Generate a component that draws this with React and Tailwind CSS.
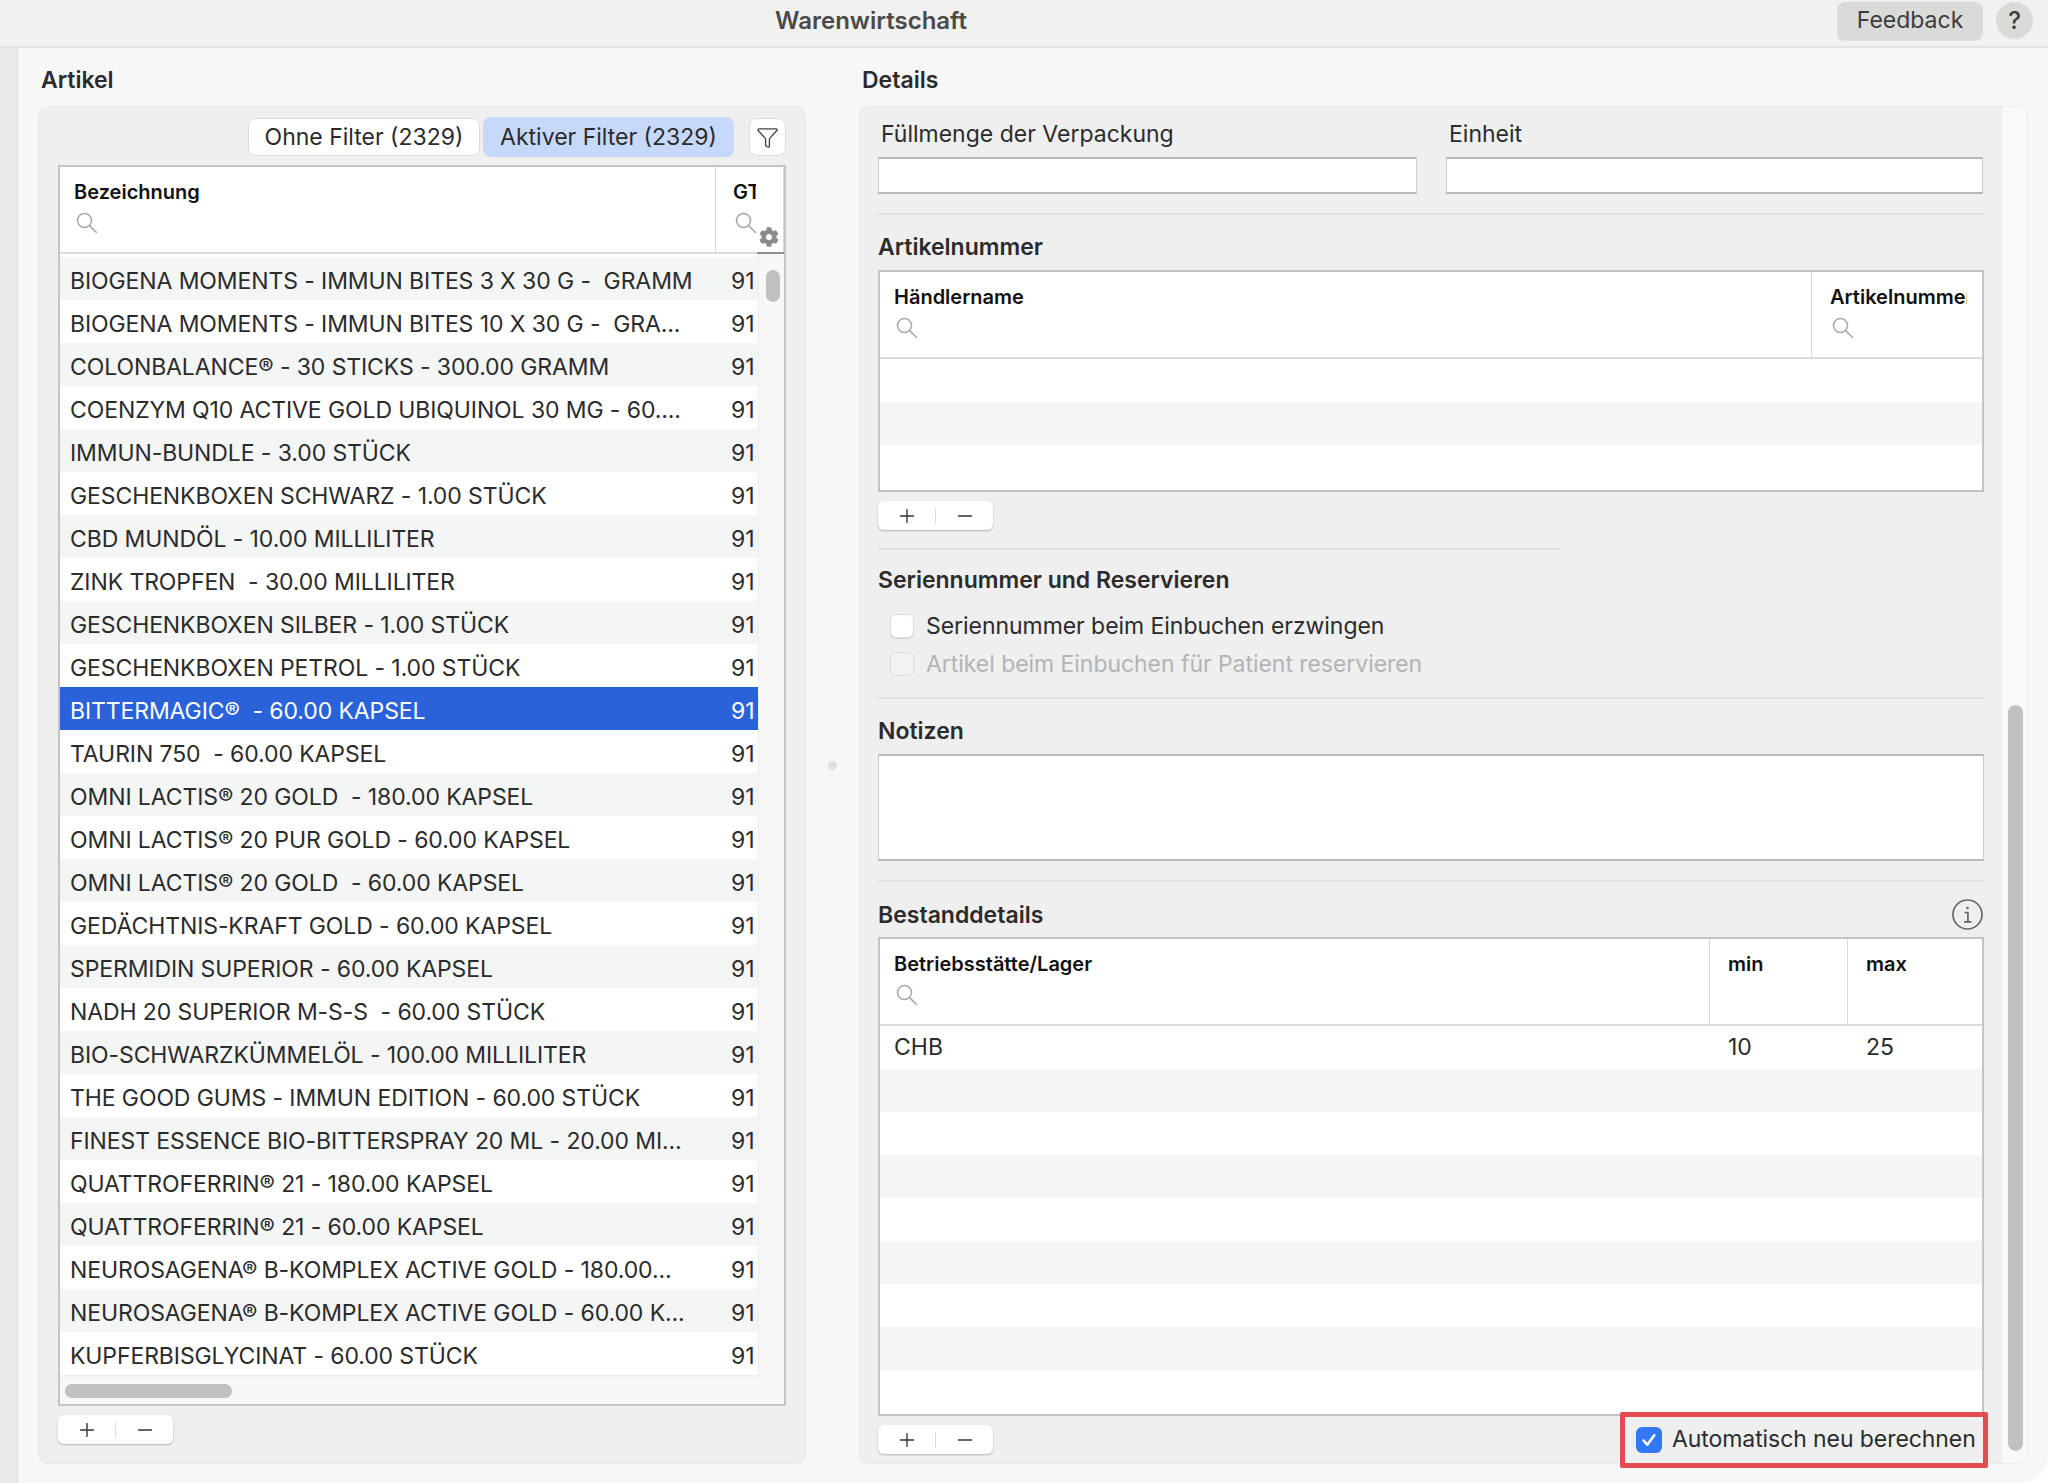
import React from "react";
import { Funnel, Plus, Minus } from "lucide-react";
import { FaCog } from "react-icons/fa";

const articles = [
  "BIOGENA MOMENTS - IMMUN BITES 3 X 30 G -  GRAMM",
  "BIOGENA MOMENTS - IMMUN BITES 10 X 30 G -  GRA...",
  "COLONBALANCE® - 30 STICKS - 300.00 GRAMM",
  "COENZYM Q10 ACTIVE GOLD UBIQUINOL 30 MG - 60....",
  "IMMUN-BUNDLE - 3.00 STÜCK",
  "GESCHENKBOXEN SCHWARZ - 1.00 STÜCK",
  "CBD MUNDÖL - 10.00 MILLILITER",
  "ZINK TROPFEN  - 30.00 MILLILITER",
  "GESCHENKBOXEN SILBER - 1.00 STÜCK",
  "GESCHENKBOXEN PETROL - 1.00 STÜCK",
  "BITTERMAGIC®  - 60.00 KAPSEL",
  "TAURIN 750  - 60.00 KAPSEL",
  "OMNI LACTIS® 20 GOLD  - 180.00 KAPSEL",
  "OMNI LACTIS® 20 PUR GOLD - 60.00 KAPSEL",
  "OMNI LACTIS® 20 GOLD  - 60.00 KAPSEL",
  "GEDÄCHTNIS-KRAFT GOLD - 60.00 KAPSEL",
  "SPERMIDIN SUPERIOR - 60.00 KAPSEL",
  "NADH 20 SUPERIOR M-S-S  - 60.00 STÜCK",
  "BIO-SCHWARZKÜMMELÖL - 100.00 MILLILITER",
  "THE GOOD GUMS - IMMUN EDITION - 60.00 STÜCK",
  "FINEST ESSENCE BIO-BITTERSPRAY 20 ML - 20.00 MI...",
  "QUATTROFERRIN® 21 - 180.00 KAPSEL",
  "QUATTROFERRIN® 21 - 60.00 KAPSEL",
  "NEUROSAGENA® B-KOMPLEX ACTIVE GOLD - 180.00...",
  "NEUROSAGENA® B-KOMPLEX ACTIVE GOLD - 60.00 K...",
  "KUPFERBISGLYCINAT - 60.00 STÜCK",
];

const SearchGlyph = () => (
  <svg width="22" height="22" viewBox="0 0 22 22" fill="none" stroke="#a9a9a9" strokeWidth="1.6" strokeLinecap="round">
    <circle cx="8.5" cy="8.5" r="7" />
    <line x1="13.6" y1="13.6" x2="20.5" y2="20.5" />
  </svg>
);

const InfoGlyph = () => (
  <svg width="33" height="33" viewBox="0 0 33 33" fill="none" stroke="#666666" strokeWidth="1.7">
    <circle cx="16.5" cy="16.5" r="14.5" />
    <circle cx="16.5" cy="10" r="1.3" fill="#666666" stroke="none" />
    <path d="M13.5 14.5h3.4v9M13 23.8h7.5" />
  </svg>
);

const AddRemove = () => (
  <div className="flex h-[29px] w-[115px] items-center rounded-md bg-white shadow-[0_1px_2px_rgba(0,0,0,0.25)]">
    <div className="flex flex-1 items-center justify-center text-[#333333]">
      <Plus size={22} strokeWidth={1.5} />
    </div>
    <div className="h-[16px] w-px bg-[#dddddd]" />
    <div className="flex flex-1 items-center justify-center text-[#333333]">
      <Minus size={22} strokeWidth={1.5} />
    </div>
  </div>
);

const HeadCell = ({ title, search = true, className = "" }) => (
  <div className={`h-full min-w-0 border-r border-[#d8d8d8] bg-white pt-[12px] last:border-r-0 ${className}`}>
    <div className="h-[26px] overflow-hidden whitespace-nowrap text-[20px] font-semibold leading-[26px] text-[#111111]">{title}</div>
    {search && (
      <div className="mt-[7px] pl-[2px]">
        <SearchGlyph />
      </div>
    )}
  </div>
);

const Divider = ({ className = "" }) => <div className={`h-[2px] bg-[#e1e1e1] ${className}`} />;

const SectionTitle = ({ children, className = "" }) => (
  <div className={`h-[28px] text-[23px] font-semibold leading-[28px] text-[#2b2b2b] ${className}`}>{children}</div>
);

const TextBox = ({ className = "" }) => (
  <div className={`border border-[#cccccc] border-t-2 border-t-[#b9b9b9] border-b-2 border-b-[#b9b9b9] bg-white ${className}`} />
);

const CheckRow = ({ label, disabled }) => (
  <div className="flex h-[38px] items-center pl-[12px]">
    <div
      className={`h-[24px] w-[24px] rounded-[6px] border border-[#dcdcdc] ${disabled ? "bg-[#f2f2f2]" : "bg-white shadow-[0_1px_1px_rgba(0,0,0,0.12)]"}`}
    />
    <span className={`ml-[12px] text-[23px] tracking-[-0.05px] ${disabled ? "text-[#b4b4b4]" : "text-[#2b2b2b]"}`}>{label}</span>
  </div>
);

const App = () => {
  return (
    <div className="h-[1483px] w-[2048px] overflow-hidden bg-white font-['Inter',sans-serif] text-[#2b2b2b]">
      <div className="flex h-full flex-col overflow-hidden rounded-br-[28px]">
        {/* title bar */}
        <div className="flex h-[48px] shrink-0 items-center border-b-2 border-[#e2e2e1] bg-[#f1f1f0] pb-[5px] pl-[775px] pr-[15px]">
          <span className="text-[24px] font-semibold text-[#4a4a4a]">Warenwirtschaft</span>
          <div className="ml-auto flex items-center gap-[13px]">
            <div className="flex h-[38px] w-[146px] items-center justify-center rounded-lg bg-[#dadad9] text-[23px] text-[#3c3c3c] shadow-[0_1px_1px_rgba(0,0,0,0.08)]">
              Feedback
            </div>
            <div className="flex h-[37px] w-[37px] items-center justify-center rounded-full bg-[#dadad9] text-[24px] font-medium text-[#3c3c3c]">
              ?
            </div>
          </div>
        </div>

        <div className="flex flex-1">
          <div className="w-[18px] shrink-0 border-r border-[#dedede] bg-[#e9e9e9]" />
          <div className="flex flex-1 bg-[#f7f7f7]">
            {/* Artikel */}
            <div className="w-[788px] shrink-0 pl-[20px]">
              <div className="flex h-[58px] items-center pl-[3px] pt-[6px] text-[23px] font-semibold">Artikel</div>
              <div className="h-[1358px] rounded-[10px] border border-[#e9e9e9] bg-[#efefef] px-[19px] pt-[10px]">
                <div className="flex items-center justify-end">
                  <div className="flex h-[38px] w-[232px] items-center justify-center rounded-lg border border-[#dedede] bg-white text-[23px]">
                    Ohne Filter (2329)
                  </div>
                  <div className="ml-[3px] flex h-[40px] w-[251px] items-center justify-center rounded-lg bg-[#c6d9fb] text-[23px]">
                    Aktiver Filter (2329)
                  </div>
                  <div className="ml-[15px] flex h-[38px] w-[37px] items-center justify-center rounded-lg border border-[#dedede] bg-white">
                    <Funnel size={23} strokeWidth={1.4} color="#444444" />
                  </div>
                </div>
                <div className="mt-[8px] flex h-[1241px] flex-col border-2 border-[#c4c4c4] bg-white">
                  <div className="relative flex h-[87px] shrink-0 border-b-2 border-[#dcdcdc]">
                    <HeadCell title="Bezeichnung" className="w-[656px] shrink-0 pl-[14px]" />
                    <HeadCell title="GTIN" className="flex-1 pl-[17px] pr-[27px]" />
                    <div className="absolute bottom-[5px] right-[5px] text-[#8a8a8a]">
                      <FaCog size={20} />
                    </div>
                    <div className="absolute -bottom-[2px] right-0 h-[2px] w-[27px] bg-[#8f8f8f]" />
                  </div>
                  <div className="flex min-h-0 flex-1">
                    <div className="w-[698px] shrink-0 pt-[3px]">
                      {articles.map((name, i) => (
                        <div
                          key={i}
                          className={`flex h-[43px] items-center overflow-hidden text-[23px] tracking-[-0.1px] ${
                            i === 10 ? "bg-[#2a62d9] text-white" : i % 2 === 0 ? "bg-[#f4f5f5]" : "bg-white"
                          }`}
                        >
                          <div className="w-[671px] shrink-0 whitespace-pre pl-[10px] pt-[5px]">{name}</div>
                          <div className="w-[25px] shrink-0 overflow-hidden pt-[5px]">913</div>
                        </div>
                      ))}
                      <div className="h-[2px] bg-[#efefef]" />
                    </div>
                    <div className="flex-1 border-l border-[#ebebeb] bg-[#f8f8f8] pl-[7px] pt-[16px]">
                      <div className="h-[32px] w-[14px] rounded-full bg-[#c0c0c0]" />
                    </div>
                  </div>
                  <div className="flex h-[27px] shrink-0 items-center bg-[#f7f7f7] pl-[5px]">
                    <div className="h-[14px] w-[167px] rounded-full bg-[#c0c0c0]" />
                  </div>
                </div>
                <div className="mt-[9px]">
                  <AddRemove />
                </div>
              </div>
            </div>

            {/* splitter */}
            <div className="flex w-[53px] shrink-0 items-center justify-center">
              <div className="h-[9px] w-[9px] rounded-full bg-[#dfdfdf]" />
            </div>

            {/* Details */}
            <div className="w-[1169px] shrink-0">
              <div className="flex h-[58px] items-center pl-[3px] pt-[6px] text-[23px] font-semibold">Details</div>
              <div className="flex h-[1358px] overflow-visible">
                <div className="w-[1143px] shrink-0 rounded-l-[10px] border-l border-t border-b border-[#e9e9e9] bg-[#efefef] px-[18px] pt-[13px]">
                  <div className="grid grid-cols-[539px_537px] gap-x-[29px]">
                    <div className="h-[28px] pl-[3px] text-[23px] leading-[28px]">Füllmenge der Verpackung</div>
                    <div className="h-[28px] pl-[3px] text-[23px] leading-[28px]">Einheit</div>
                    <TextBox className="mt-[9px] h-[37px]" />
                    <TextBox className="mt-[9px] h-[37px]" />
                  </div>
                  <Divider className="mt-[19px]" />
                  <SectionTitle className="mt-[18px]">Artikelnummer</SectionTitle>

                  <div className="mt-[9px] h-[222px] border-2 border-[#c4c4c4] bg-white">
                    <div className="flex h-[87px] border-b-2 border-[#dcdcdc]">
                      <HeadCell title="Händlername" className="w-[932px] shrink-0 pl-[14px]" />
                      <HeadCell title="Artikelnummer" className="flex-1 pl-[18px] pr-[15px]" />
                    </div>
                    <div className="h-[43px] bg-white" />
                    <div className="h-[43px] bg-[#f4f5f5]" />
                    <div className="h-[43px] bg-white" />
                  </div>
                  <div className="mt-[9px]">
                    <AddRemove />
                  </div>
                  <Divider className="mt-[18px] w-[682px]" />

                  <SectionTitle className="mt-[16px]">Seriennummer und Reservieren</SectionTitle>
                  <div className="mt-[13px]">
                    <CheckRow label="Seriennummer beim Einbuchen erzwingen" />
                    <CheckRow label="Artikel beim Einbuchen für Patient reservieren" disabled />
                  </div>
                  <Divider className="mt-[14px]" />

                  <SectionTitle className="mt-[18px]">Notizen</SectionTitle>
                  <TextBox className="mt-[9px] h-[107px]" />
                  <Divider className="mt-[19px]" />

                  <div className="mt-[16px] flex items-center justify-between">
                    <SectionTitle>Bestanddetails</SectionTitle>
                    <InfoGlyph />
                  </div>
                  <div className="mt-[6px] h-[479px] overflow-hidden border-2 border-[#c4c4c4] bg-white">
                    <div className="flex h-[87px] border-b-2 border-[#dcdcdc]">
                      <HeadCell title="Betriebsstätte/Lager" className="w-[830px] shrink-0 pl-[14px]" />
                      <HeadCell title="min" search={false} className="w-[138px] shrink-0 pl-[18px]" />
                      <HeadCell title="max" search={false} className="flex-1 pl-[18px]" />
                    </div>
                    {Array.from({ length: 9 }).map((_, i) => (
                      <div key={i} className={`flex h-[43px] items-center text-[23px] ${i % 2 === 1 ? "bg-[#f4f5f5]" : "bg-white"}`}>
                        {i === 0 && (
                          <>
                            <div className="w-[830px] pl-[14px]">CHB</div>
                            <div className="w-[138px] pl-[18px]">10</div>
                            <div className="pl-[18px]">25</div>
                          </>
                        )}
                      </div>
                    ))}
                  </div>
                  <div className="relative z-10 mt-[9px] flex h-[29px] items-center justify-between">
                    <AddRemove />
                    <div className="-mr-[4px] flex h-[56px] w-[368px] shrink-0 items-center rounded-[2px] border-[5px] border-[#e44b50] pl-[11px]">
                      <div className="flex h-[26px] w-[26px] items-center justify-center rounded-[6px] bg-[#3478f6]">
                        <svg width="18" height="18" viewBox="0 0 18 18" fill="none" stroke="white" strokeWidth="2.6" strokeLinecap="round" strokeLinejoin="round">
                          <path d="M3.5 9.5l3.8 4.2 7-9.5" />
                        </svg>
                      </div>
                      <span className="ml-[10px] whitespace-nowrap text-[23px] tracking-[-0.08px]">Automatisch neu berechnen</span>
                    </div>
                  </div>
                </div>
                <div className="flex flex-1 flex-col justify-end rounded-r-[10px] border border-l-0 border-[#ececec] bg-[#f9f9f9] pb-[12px] pl-[6px]">
                  <div className="h-[746px] w-[15px] rounded-full bg-[#c0c0c0]" />
                </div>
              </div>
            </div>
          </div>
        </div>
      </div>
    </div>
  );
};

export default App;
